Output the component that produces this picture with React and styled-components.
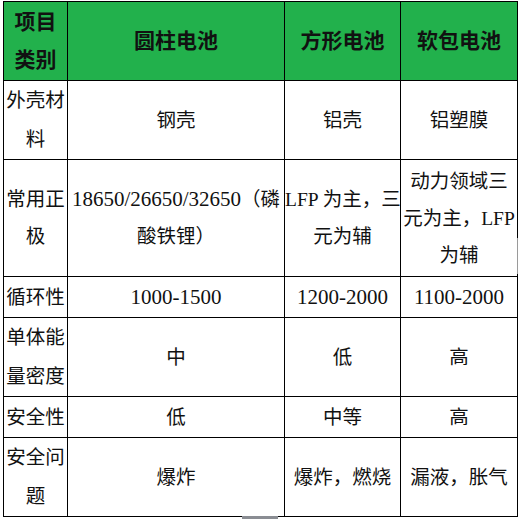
import React from 'react'
import styled, { createGlobalStyle } from 'styled-components'

const GlobalStyle = createGlobalStyle`
  html, body {
    margin: 0;
    padding: 0;
    background: #fff;
  }
  body {
    font-family: "Liberation Serif", "Noto Sans CJK SC", serif;
    color: #111;
  }
`

const Page = styled.div`
  position: relative;
  width: 519px;
  height: 519px;
  padding: 1px 0 0 3px;
  box-sizing: border-box;
  overflow: hidden;
`

const Table = styled.table`
  border-collapse: collapse;
  table-layout: fixed;
  width: 515px;
`

const HeadCell = styled.th`
  background: #22b14c;
  border: 1px solid #000;
  height: 78px;
  padding: 0;
  font-size: 21px;
  font-weight: bold;
  line-height: 38px;
  text-align: center;
  vertical-align: middle;
  color: #111;
`

const Cell = styled.td`
  border: 1px solid #000;
  height: ${props => props.h}px;
  padding: 0;
  font-size: 19.5px;
  line-height: ${props => props.lh || 39}px;
  text-align: center;
  vertical-align: middle;
  white-space: nowrap;
  overflow: visible;
`

const Digits = styled.span`
  font-size: 21px;
`

const ScrollThumb = styled.div`
  position: absolute;
  left: 242px;
  bottom: 0;
  width: 36px;
  height: 3px;
  background: #8a8d93;
`

const SideThumb = styled.div`
  position: absolute;
  right: 1px;
  top: 238px;
  width: 1px;
  height: 36px;
  background: #9a9a9a;
`

const columns = [64, 217, 116, 117]

const header = [['项目', '类别'], ['圆柱电池'], ['方形电池'], ['软包电池']]

const rows = [
  { h: 78, cells: [['外壳材', '料'], ['钢壳'], ['铝壳'], ['铝塑膜']] },
  {
    h: 116,
    lh: 37,
    cells: [
      ['常用正', '极'],
      ['18650/26650/32650（磷', '酸铁锂）'],
      ['LFP 为主，三', '元为辅'],
      ['动力领域三', '元为主，LFP', '为辅']
    ]
  },
  { h: 40, cells: [['循环性'], ['1000-1500'], ['1200-2000'], ['1100-2000']] },
  { h: 78, cells: [['单体能', '量密度'], ['中'], ['低'], ['高']] },
  { h: 40, cells: [['安全性'], ['低'], ['中等'], ['高']] },
  { h: 78, cells: [['安全问', '题'], ['爆炸'], ['爆炸，燃烧'], ['漏液，胀气']] }
]

// runs of digits get the slightly wider size the numbers have in the sheet
const renderLine = line =>
  line.split(/([0-9/\-]+)/).map((part, i) =>
    /^[0-9/\-]+$/.test(part) ? <Digits key={i}>{part}</Digits> : part
  )

const Lines = ({ lines }) =>
  lines.map((line, i) => (
    <React.Fragment key={i}>
      {i > 0 && <br />}
      {renderLine(line)}
    </React.Fragment>
  ))

export default function App () {
  return (
    <Page>
      <GlobalStyle />
      <Table>
        <colgroup>
          {columns.map((w, i) => (
            <col key={i} style={{ width: w }} />
          ))}
        </colgroup>
        <thead>
          <tr>
            {header.map((lines, i) => (
              <HeadCell key={i}>
                <Lines lines={lines} />
              </HeadCell>
            ))}
          </tr>
        </thead>
        <tbody>
          {rows.map((row, r) => (
            <tr key={r}>
              {row.cells.map((lines, c) => (
                <Cell key={c} h={row.h} lh={row.lh}>
                  <Lines lines={lines} />
                </Cell>
              ))}
            </tr>
          ))}
        </tbody>
      </Table>
      <ScrollThumb />
      <SideThumb />
    </Page>
  )
}
